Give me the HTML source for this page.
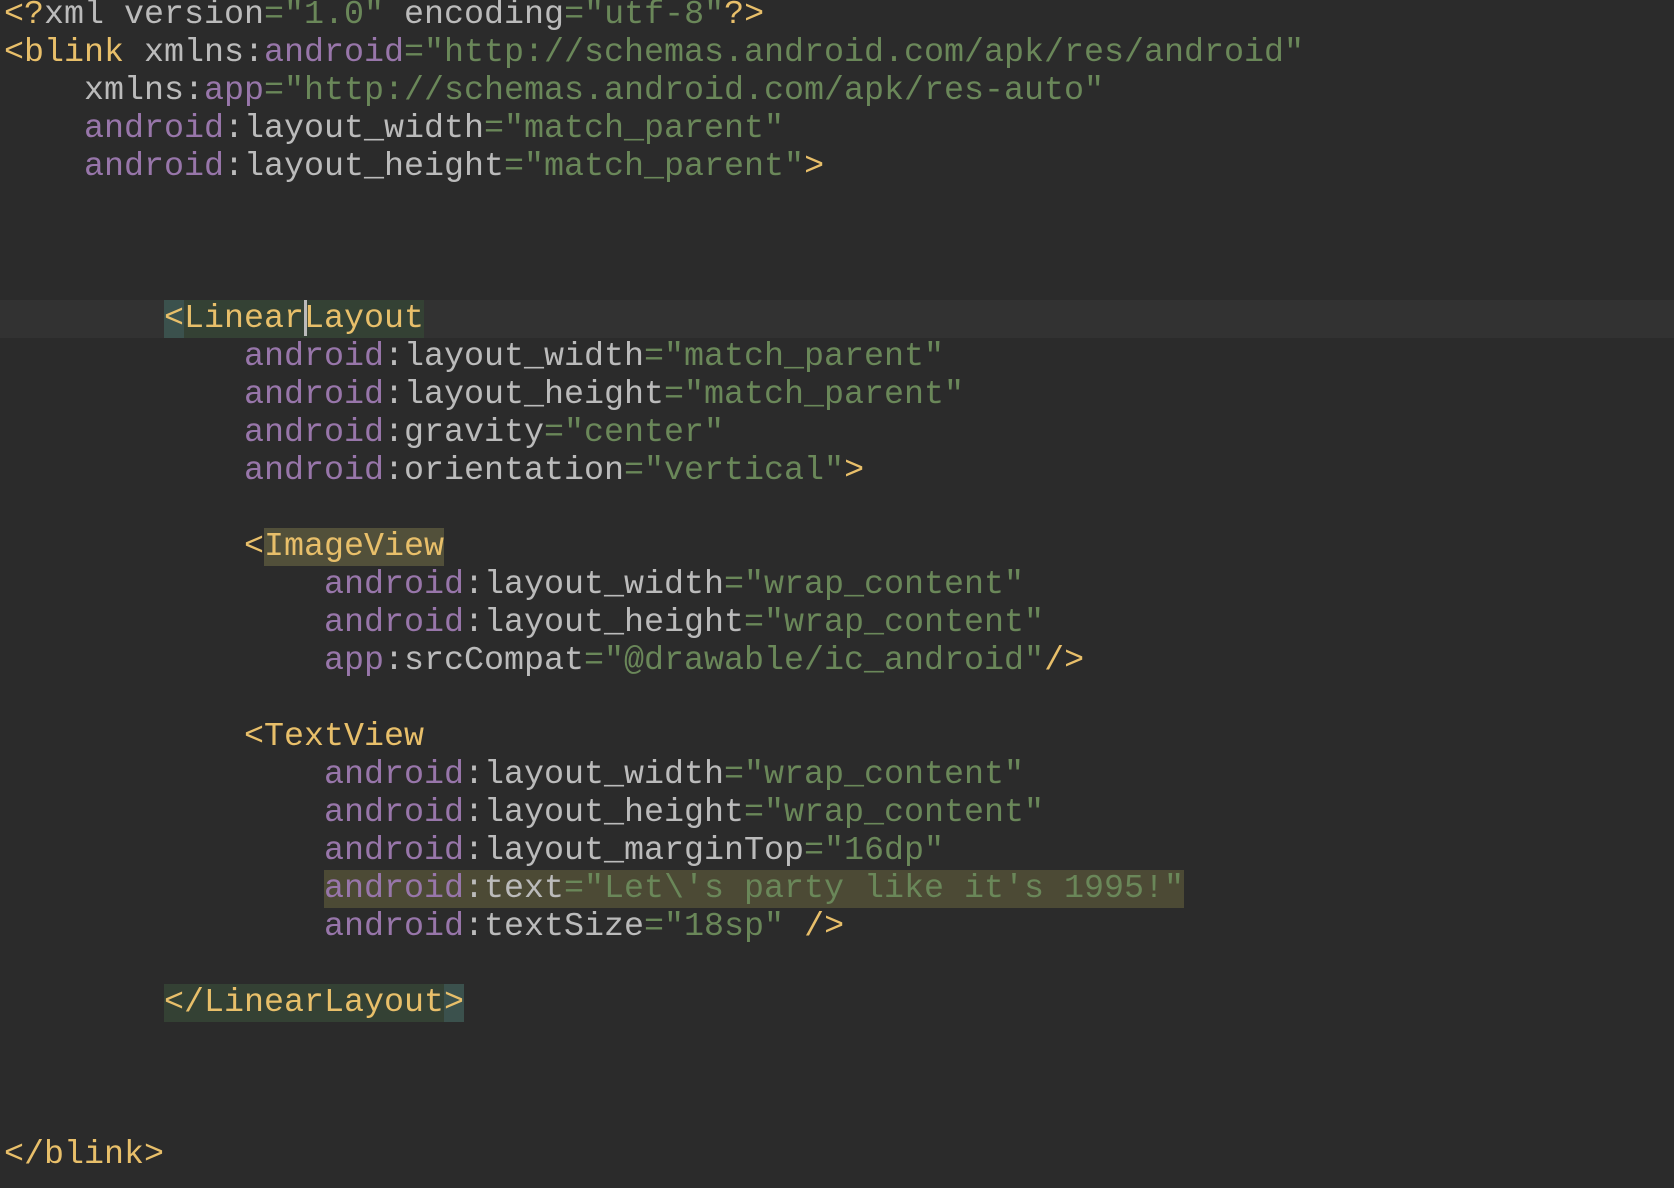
<!DOCTYPE html>
<html><head><meta charset="utf-8"><style>
html,body{margin:0;padding:0;background:#2b2b2b;width:1674px;height:1188px;overflow:hidden}
#c{position:absolute;left:4px;top:-4px;font-family:"Liberation Mono",monospace;font-size:33.33px;line-height:38px;color:#bbbbbb}
.l{height:38px;position:relative;white-space:pre}
.t{color:#e8bf6a}.a{color:#9876aa}.v{color:#6a8759}
.cur{position:absolute;left:-4px;top:0;width:1674px;height:38px;background:#323232}
.m1{background:#3b514d}.m2{background:#344134}
.iv{background:#52503a}.hl{background:#4c4a35}
.caret{display:inline-block;width:3px;height:36px;background:#bbbbbb;vertical-align:top;margin-right:-3px}
</style></head><body>
<div id="c">
<div class="l"><span class="t">&lt;?</span>xml version<span class="v">="1.0"</span> encoding<span class="v">="utf-8"</span><span class="t">?&gt;</span></div>
<div class="l"><span class="t">&lt;blink</span> xmlns:<span class="a">android</span><span class="v">="http://schemas.android.com/apk/res/android"</span></div>
<div class="l">    xmlns:<span class="a">app</span><span class="v">="http://schemas.android.com/apk/res-auto"</span></div>
<div class="l">    <span class="a">android</span>:layout_width<span class="v">="match_parent"</span></div>
<div class="l">    <span class="a">android</span>:layout_height<span class="v">="match_parent"</span><span class="t">&gt;</span></div>
<div class="l"> </div><div class="l"> </div><div class="l"> </div>
<div class="l"><div class="cur"></div><span style="position:relative">        <span class="t m1">&lt;</span><span class="t m2">Linear<span class="caret"></span>Layout</span></span></div>
<div class="l">            <span class="a">android</span>:layout_width<span class="v">="match_parent"</span></div>
<div class="l">            <span class="a">android</span>:layout_height<span class="v">="match_parent"</span></div>
<div class="l">            <span class="a">android</span>:gravity<span class="v">="center"</span></div>
<div class="l">            <span class="a">android</span>:orientation<span class="v">="vertical"</span><span class="t">&gt;</span></div>
<div class="l"> </div>
<div class="l">            <span class="t">&lt;</span><span class="t iv">ImageView</span></div>
<div class="l">                <span class="a">android</span>:layout_width<span class="v">="wrap_content"</span></div>
<div class="l">                <span class="a">android</span>:layout_height<span class="v">="wrap_content"</span></div>
<div class="l">                <span class="a">app</span>:srcCompat<span class="v">="@drawable/ic_android"</span><span class="t">/&gt;</span></div>
<div class="l"> </div>
<div class="l">            <span class="t">&lt;TextView</span></div>
<div class="l">                <span class="a">android</span>:layout_width<span class="v">="wrap_content"</span></div>
<div class="l">                <span class="a">android</span>:layout_height<span class="v">="wrap_content"</span></div>
<div class="l">                <span class="a">android</span>:layout_marginTop<span class="v">="16dp"</span></div>
<div class="l">                <span class="hl"><span class="a">android</span>:text<span class="v">="Let\'s party like it's 1995!"</span></span></div>
<div class="l">                <span class="a">android</span>:textSize<span class="v">="18sp"</span> <span class="t">/&gt;</span></div>
<div class="l"> </div>
<div class="l">        <span class="t m2">&lt;/LinearLayout</span><span class="t m1">&gt;</span></div>
<div class="l"> </div><div class="l"> </div><div class="l"> </div>
<div class="l"><span class="t">&lt;/blink&gt;</span></div>
</div>
</body></html>
